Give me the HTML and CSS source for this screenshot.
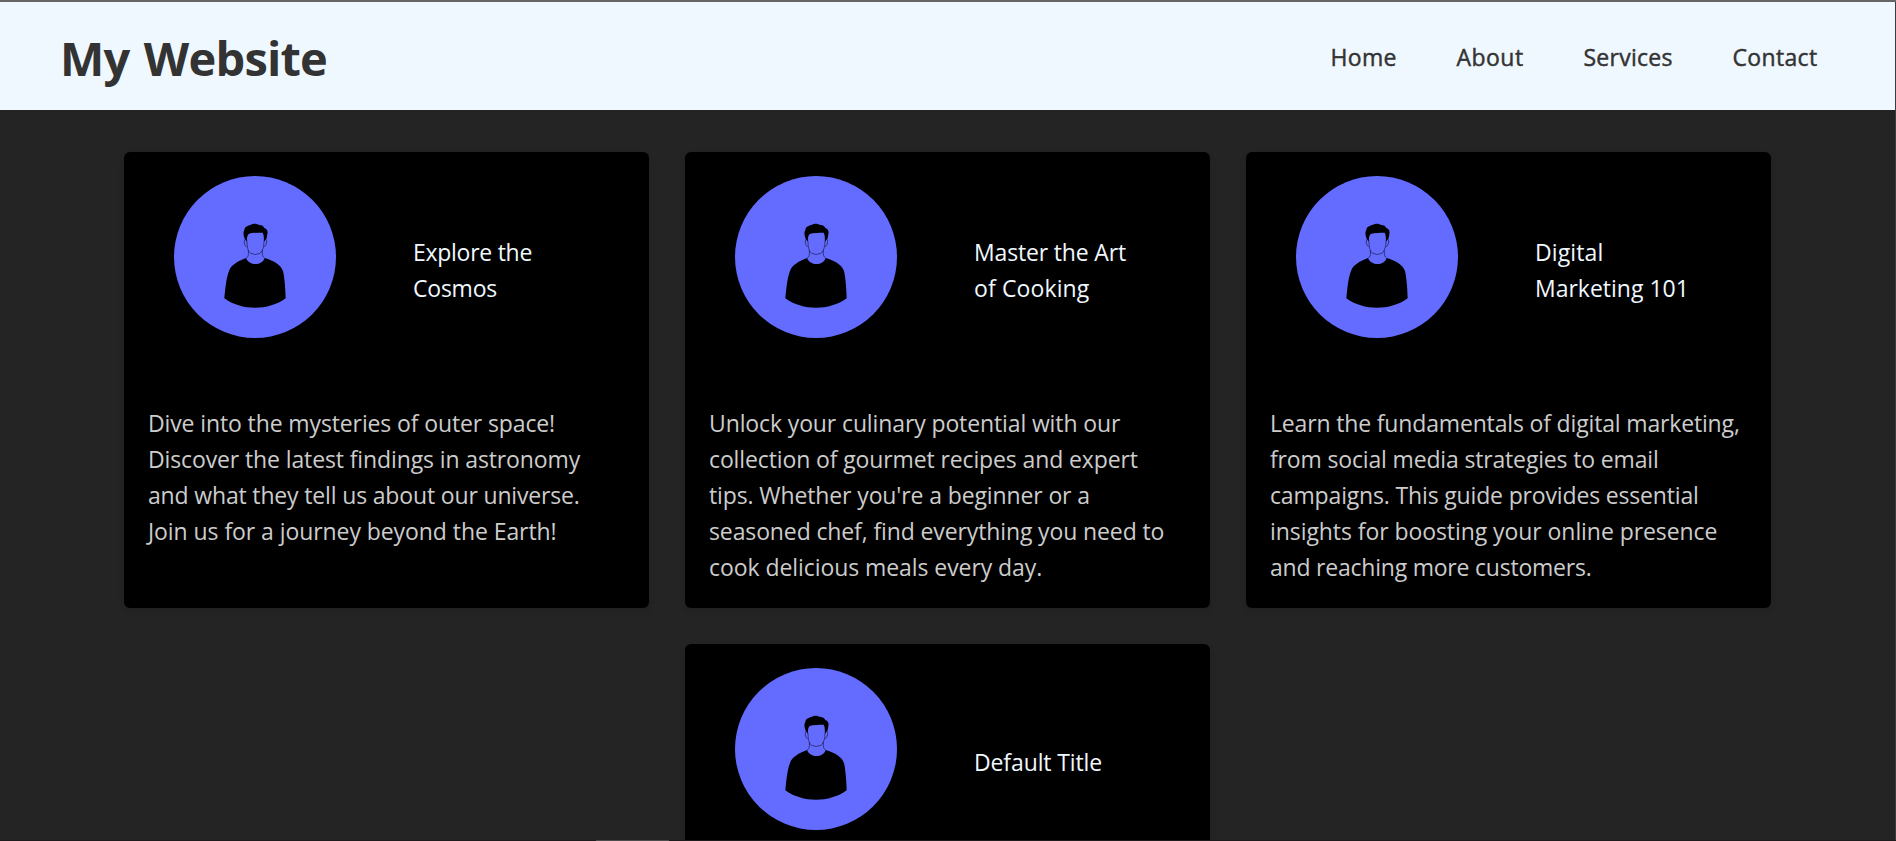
FILE: index.html
```html
<!DOCTYPE html>
<html lang="en">
<head>
<meta charset="utf-8">
<title>My Website</title>
<link rel="stylesheet" href="styles.css">
</head>
<body>
<svg width="0" height="0" class="sprite" aria-hidden="true">
  <symbol id="person" viewBox="42 33 486 486">
    <path d="M258 279C234 288 213 300 207 318C198 342 196 372 193 400C244 438 326 438 377 400C376 370 374 340 369 318C362 298 340 287 314 279C306 303 268 303 258 279Z"/>
    <path d="M260 230C252 220 247 205 253 195C254 184 264 182 273 179C283 174 291 178 298 180C306 181 310 183 313 189C322 192 324 200 322 208L320 220L312 230C311 222 313 212 308 203C293 204 278 202 266 207C259 214 262 225 260 230Z"/>
    <path class="line" d="M261 227C261 245 263 259 272 265Q286 272 300 265C309 257 312 244 312 227M265 256C265 268 267 275 258 279M307 256C307 268 306 275 314 279M254 223C251 234 254 243 260 245M319 223C322 234 318 243 312 245"/>
  </symbol>
</svg>
<header class="header">
  <h1 class="logo">My Website</h1>
  <nav class="nav"><a class="w3">Home</a><a class="w5">About</a><a class="w3">Services</a><a class="w4">Contact</a></nav>
</header>
<main class="cards">
  <article class="card">
    <div class="top"><div class="avatar"><svg><use href="#person"/></svg></div><h2><span class="t5">Explore the</span><span class="t4">Cosmos</span></h2></div>
    <p><span class="t2">Dive into the mysteries of outer space!</span><span class="t2">Discover the latest findings in astronomy</span><span class="t3">and what they tell us about our universe.</span><span class="t1">Join us for a journey beyond the Earth!</span></p>
  </article>
  <article class="card">
    <div class="top"><div class="avatar"><svg><use href="#person"/></svg></div><h2><span class="t3">Master the Art</span><span class="w1">of Cooking</span></h2></div>
    <p><span class="t2">Unlock your culinary potential with our</span><span class="t2">collection of gourmet recipes and expert</span><span class="t2">tips. Whether you're a beginner or a</span><span class="t2">seasoned chef, find everything you need to</span><span class="t1">cook delicious meals every day.</span></p>
  </article>
  <article class="card">
    <div class="top"><div class="avatar"><svg><use href="#person"/></svg></div><h2><span class="w1">Digital</span><span>Marketing 101</span></h2></div>
    <p><span class="t3">Learn the fundamentals of digital marketing,</span><span class="t3">from social media strategies to email</span><span class="t3">campaigns. This guide provides essential</span><span class="t1">insights for boosting your online presence</span><span class="t4">and reaching more customers.</span></p>
  </article>
  <article class="card">
    <div class="top"><div class="avatar"><svg><use href="#person"/></svg></div><h2><span class="t2">Default Title</span></h2></div>
  </article>
</main>
<div class="edge-right"></div>
<div class="edge-bottom"></div>
</body>
</html>
```
FILE: styles.css
```css
* { box-sizing: border-box; margin: 0; padding: 0; }
html { height: 100%; overflow: hidden; }
body {
  display: flex;
  flex-direction: column;
  height: 100%;
  overflow: hidden;
  background: #242424;
  font: 400 23px/36px "Open Sans", "Noto Sans", sans-serif;
}
.sprite { position: absolute; }
.header {
  flex: none;
  height: 110px;
  padding: 2px 78.5px 0 60px;
  display: flex;
  align-items: center;
  justify-content: space-between;
  background: #f0f8ff;
  border-top: 2px solid #666;
  color: #333;
}
.logo { padding-top: 2px; font-size: 47px; font-weight: 700; line-height: 72px; letter-spacing: -.8px; word-spacing: 3px; }
.nav { display: flex; gap: 59.7px; -webkit-text-stroke: .45px #333; }
.cards {
  flex: 1;
  min-height: 0;
  overflow: hidden;
  display: flex;
  flex-wrap: wrap;
  align-content: flex-start;
  justify-content: center;
  gap: 36px;
  padding: 42px 120px 0 119px;
}
.card {
  width: 525px;
  height: 456px;
  padding: 24px;
  border-radius: 6px;
  background: #000;
  box-shadow: 0 3px 6px rgba(0, 0, 0, .1);
}
.top { display: flex; align-items: center; height: 187px; padding-left: 26px; }
.avatar { width: 162px; height: 162px; align-self: flex-start; border-radius: 50%; background: #646cff; }
.avatar svg { display: block; width: 162px; height: 162px; }
.line { fill: none; stroke: #000; stroke-width: 1.5; }
h2 { margin-left: 77px; font-size: 23px; font-weight: 400; color: #f0f8ff; }
h2 span, p span { display: block; white-space: nowrap; }
p { margin-top: 42px; color: #ccc; }

.t1 { letter-spacing: -.07px; }
.t2 { letter-spacing: -.12px; }
.t3 { letter-spacing: -.16px; }
.t4 { letter-spacing: -.22px; }
.t5 { letter-spacing: -.27px; }
.w1 { letter-spacing: .12px; }
.w3 { letter-spacing: .28px; }
.w4 { letter-spacing: .35px; }
.w5 { letter-spacing: .5px; }

.edge-right { position: absolute; right: 0; top: 2px; bottom: 0; width: 1px; background: #3c3c3c; }
.edge-bottom {
  position: absolute;
  left: 0;
  right: 0;
  bottom: 0;
  height: 1px;
  background: linear-gradient(90deg, #1e1c1c 596px, #4c4c4c 596px, #4c4c4c 669px, #1e1c1c 669px);
}
```
